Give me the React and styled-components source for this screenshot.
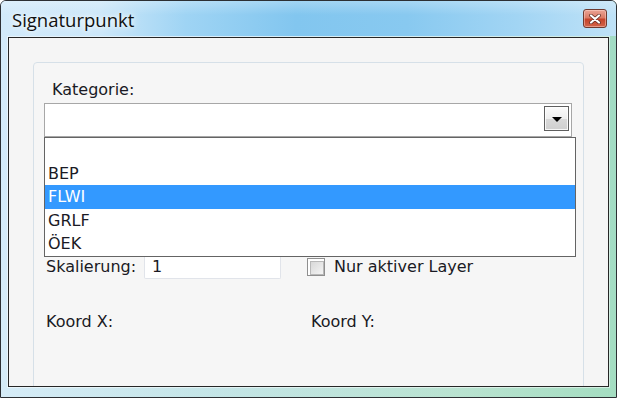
import React from 'react';
import styled, { createGlobalStyle } from 'styled-components';

const GlobalStyle = createGlobalStyle`
  html, body {
    margin: 0;
    padding: 0;
    background: #ffffff;
    overflow: hidden;
  }
  * {
    box-sizing: border-box;
  }
`;

const Window = styled.div`
  width: 617px;
  height: 398px;
  display: flex;
  flex-direction: column;
  border: 1px solid #2c2f33;
  border-radius: 6px 6px 0 0;
  overflow: hidden;
  background:
    linear-gradient(90deg, rgba(215, 236, 250, 0.9) 0%, rgba(190, 225, 246, 0.4) 35%, rgba(170, 222, 196, 0.5) 75%, rgba(160, 220, 190, 0.9) 100%),
    linear-gradient(180deg, #aed8f3 0%, #bfe1f6 60%, #c8e8dc 100%);
`;

const TitleBar = styled.div`
  height: 35px;
  flex: 0 0 35px;
  display: flex;
  align-items: center;
  justify-content: space-between;
  padding: 0 9px 0 11px;
  background:
    linear-gradient(180deg, rgba(255, 255, 255, 0.25) 0%, rgba(255, 255, 255, 0) 40%),
    linear-gradient(90deg, #d2eafa 0%, #cce7f9 16%, #9fd4f4 30%, #82c6ef 48%, #88c9f0 66%, #a2d5f4 84%, #bfe2f7 100%);
`;

const Title = styled.span`
  font-family: "Open Sans", "Liberation Sans", sans-serif;
  font-size: 18.5px;
  color: #101010;
  text-shadow: 0 0 9px rgba(255, 255, 255, 0.95), 0 0 4px rgba(255, 255, 255, 0.9);
  margin-top: 1px;
`;

const CloseButton = styled.div`
  width: 24px;
  height: 19px;
  display: flex;
  align-items: center;
  justify-content: center;
  border: 1px solid #6e3a30;
  border-radius: 3px;
  background: linear-gradient(180deg, #eaa495 0%, #db7b66 45%, #c5432a 55%, #d2654a 100%);
  box-shadow: inset 0 0 0 1px rgba(255, 220, 210, 0.45);
`;

const Client = styled.div`
  flex: 1;
  margin: 1px 7px 10px 7px;
  border: 1px solid #262626;
  box-shadow: 0 0 0 1px rgba(255, 255, 255, 0.5);
  background: #f5f5f5;
  overflow: hidden;
  padding: 24px 24px 0 24px;
`;

const GroupBox = styled.div`
  height: 340px;
  border: 1px solid #d6e0e8;
  border-radius: 4px;
  background: #f6f6f6;
  display: flex;
  flex-direction: column;
  font-family: "DejaVu Sans", "Liberation Sans", sans-serif;
  font-size: 16px;
  color: #1a1a24;
`;

const FieldLabel = styled.div`
  padding: 18px 0 0 18px;
  line-height: 18px;
`;

const Combo = styled.div`
  position: relative;
  height: 34px;
  margin: 4px 11px 0 10px;
  border: 1px solid #a7a7a7;
  background: #ffffff;
`;

const DropButton = styled.div`
  position: absolute;
  top: 2px;
  right: 2px;
  width: 25px;
  height: 25px;
  display: flex;
  align-items: center;
  justify-content: center;
  border: 1px solid #5f5f5f;
  background: linear-gradient(180deg, #fbfbfb 0%, #eeeeee 50%, #d9d9d9 51%, #cfcfcf 100%);
  box-shadow: inset 0 0 0 1px rgba(255, 255, 255, 0.8);
`;

const Arrow = styled.span`
  width: 0;
  height: 0;
  border-left: 5px solid transparent;
  border-right: 5px solid transparent;
  border-top: 5px solid #000000;
  margin-top: 2px;
`;

const DropList = styled.ul`
  position: absolute;
  top: 33px;
  left: -1px;
  width: 532px;
  margin: 0;
  padding: 0;
  list-style: none;
  background: #ffffff;
  border: 1px solid #646464;
  z-index: 10;
`;

const Option = styled.li`
  height: 23.6px;
  line-height: 23.6px;
  padding-left: 3px;
  color: ${props => (props.$selected ? '#ffffff' : '#1a1a24')};
  background: ${props => (props.$selected ? '#3399ff' : 'transparent')};
`;

const Row = styled.div`
  display: grid;
  grid-template-columns: 98px 163px 1fr;
  align-items: center;
  height: 25px;
  margin-top: ${props => props.$top}px;
  padding-left: 12px;
  line-height: 18px;
`;

const TextInput = styled.div`
  width: 137px;
  height: 25px;
  border: 1px solid #e1e4ea;
  border-top-color: #b5b8c0;
  border-radius: 2px;
  background: #ffffff;
  padding-left: 7px;
  line-height: 23px;
`;

const CheckLine = styled.div`
  display: flex;
  align-items: center;
  gap: 9px;
`;

const CheckBox = styled.span`
  width: 18px;
  height: 18px;
  border: 1px solid #8f8f8f;
  background: #ffffff;
  padding: 2px;
  display: block;

  &::after {
    content: '';
    display: block;
    width: 100%;
    height: 100%;
    border: 1px solid #b8b8b8;
    background: linear-gradient(135deg, #d8d8d8 0%, #f4f4f4 100%);
  }
`;

const Coord = styled.span`
  padding-left: ${props => props.$indent || 0}px;
`;

const options = ['', 'BEP', 'FLWI', 'GRLF', 'ÖEK'];

export default function App() {
  return (
    <>
      <GlobalStyle />
      <Window>
        <TitleBar>
          <Title>Signaturpunkt</Title>
          <CloseButton>
            <svg width="12" height="10" viewBox="0 0 12 10">
              <path d="M2 1.5 L10 8.5 M10 1.5 L2 8.5" stroke="#5a2a22" strokeWidth="3.6" strokeLinecap="round" />
              <path d="M2 1.5 L10 8.5 M10 1.5 L2 8.5" stroke="#ffffff" strokeWidth="2.2" strokeLinecap="round" />
            </svg>
          </CloseButton>
        </TitleBar>
        <Client>
          <GroupBox>
            <FieldLabel>Kategorie:</FieldLabel>
            <Combo>
              <DropButton>
                <Arrow />
              </DropButton>
              <DropList>
                {options.map(opt => (
                  <Option key={opt || 'leer'} $selected={opt === 'FLWI'}>
                    {opt}
                  </Option>
                ))}
              </DropList>
            </Combo>
            <Row $top={117}>
              <span>Skalierung:</span>
              <TextInput>1</TextInput>
              <CheckLine>
                <CheckBox />
                <span>Nur aktiver Layer</span>
              </CheckLine>
            </Row>
            <Row $top={30}>
              <span>Koord X:</span>
              <span />
              <Coord $indent={4}>Koord Y:</Coord>
            </Row>
          </GroupBox>
        </Client>
      </Window>
    </>
  );
}
